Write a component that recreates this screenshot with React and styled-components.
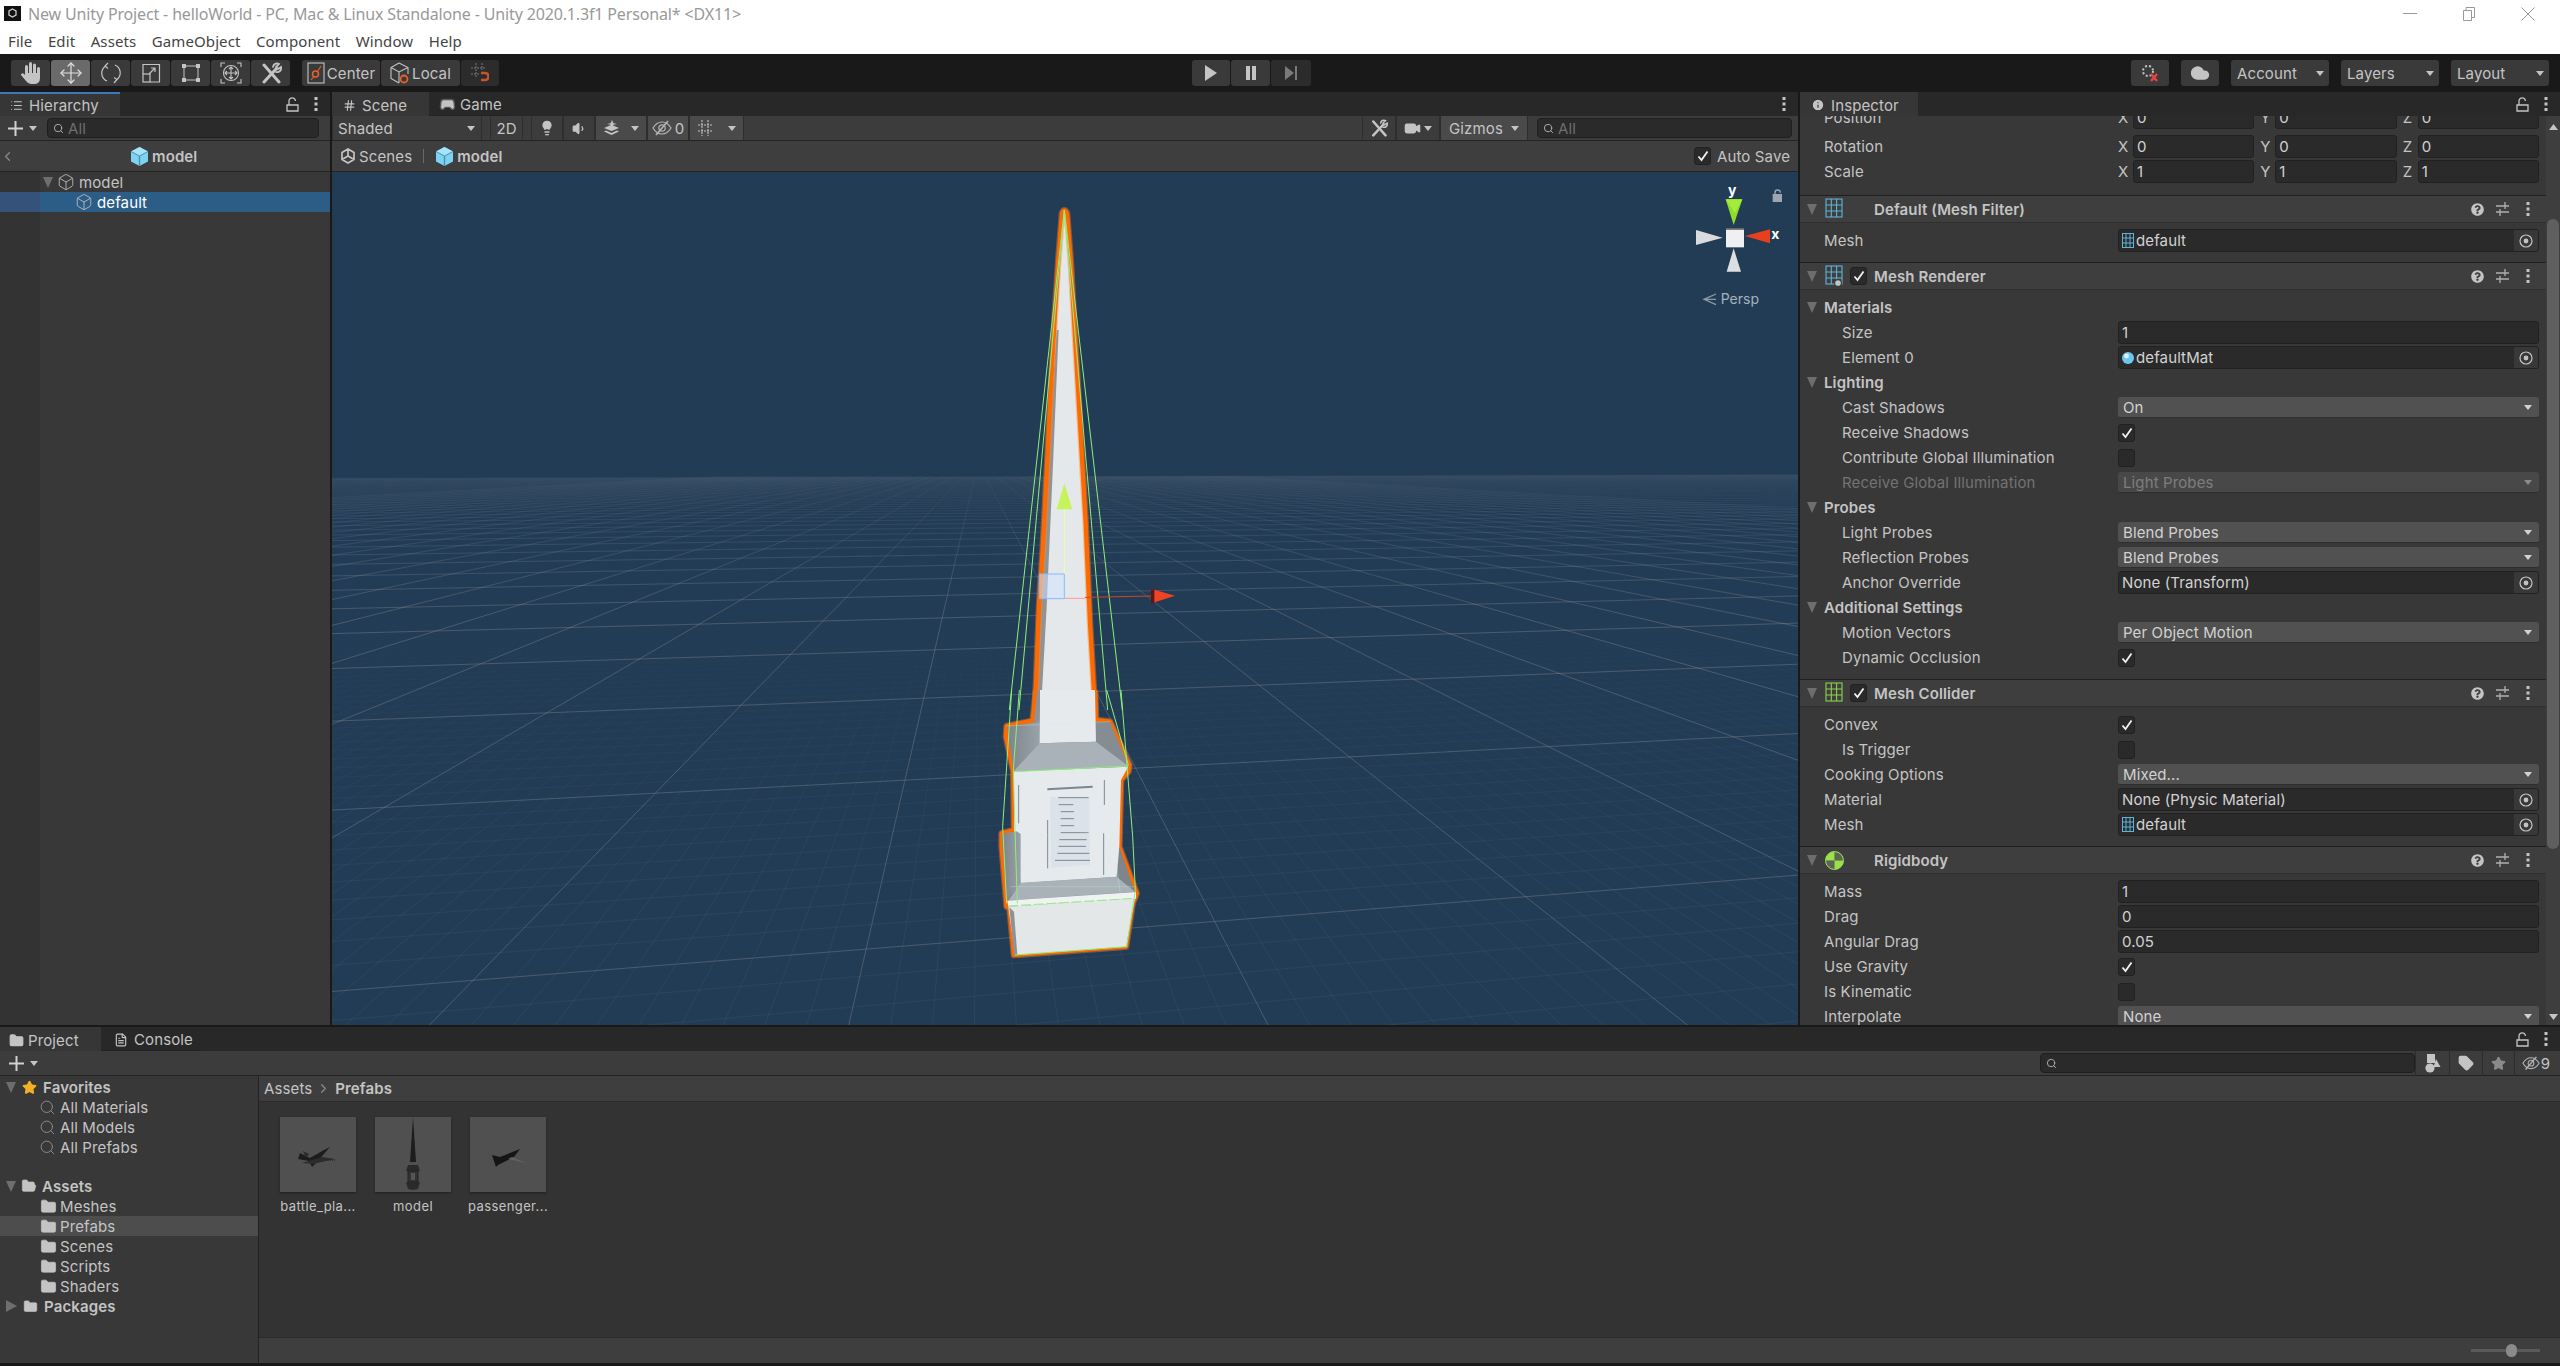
import React from "react";
import styled, { createGlobalStyle } from "styled-components";
import { Move, Box, Folder, FolderOpen, Search, Star, Tag, Cloud, Lightbulb, Volume1, Video, Info, FileText, Gamepad2, ChevronLeft, ChevronRight, Hash, List } from "lucide-react";
import { FaQuestionCircle } from "react-icons/fa";

const GlobalStyle = createGlobalStyle`
  html, body { margin: 0; padding: 0; background: #191919; overflow: hidden; }
  * { box-sizing: border-box; }
  svg { display: block; flex: none; }
`;

const Window = styled.div`
  width: 2560px;
  height: 1366px;
  display: flex;
  flex-direction: column;
  background: #191919;
  font-family: Inter, "Liberation Sans", sans-serif;
  font-size: 15px;
  letter-spacing: 0.12px;
  color: #c4c4c4;
  overflow: hidden;
`;

const TitleBar = styled.div`
  height: 27px;
  background: #fff;
  display: flex;
  align-items: center;
  padding-left: 4px;
  font-family: "Noto Sans", sans-serif;
  font-size: 16px;
  letter-spacing: -0.15px;
  color: #999;
`;
const TitleText = styled.span`
  margin-left: 7px;
  white-space: nowrap;
`;
const WinControls = styled.div`
  margin-left: auto;
  padding-right: 3px;
  display: flex;
`;
const WinButton = styled.div`
  width: 59px;
  height: 27px;
  display: flex;
  align-items: center;
  justify-content: center;
`;
const MenuBar = styled.div`
  height: 27px;
  background: #fff;
  display: flex;
  align-items: center;
  gap: 15.5px;
  padding-left: 8px;
  font-family: "Noto Sans", sans-serif;
  font-size: 15px;
  letter-spacing: 0.1px;
  color: #444;
`;

const Toolbar = styled.div`
  height: 38px;
  background: #191919;
  display: flex;
  align-items: center;
  padding: 0 11px 0 11px;
`;
const ToolGroup = styled.div`
  display: flex;
  gap: 1px;
  margin-left: ${p => p.$ml || 0}px;
`;
const ToolButton = styled.div`
  width: ${p => p.$w || 39}px;
  height: 26px;
  display: flex;
  align-items: center;
  justify-content: center;
  gap: 2px;
  background: ${p => (p.$on ? "#6a6a6a" : p.$dim ? "#2c2c2c" : "#3a3a3a")};
  border-radius: 3px;
  color: #c4c4c4;
`;
const RightGroup = styled.div`
  margin-left: auto;
  display: flex;
  gap: 12px;
`;
const TopDropdown = styled.div`
  width: 98px;
  height: 26px;
  background: #3a3a3a;
  border-radius: 3px;
  display: flex;
  align-items: center;
  justify-content: space-between;
  padding: 0 5px 0 6px;
`;

const Arrow = styled.i`
  display: block;
  flex: none;
  width: 0;
  height: 0;
  border-left: ${p => p.$s || 4}px solid transparent;
  border-right: ${p => p.$s || 4}px solid transparent;
  border-top: ${p => (p.$s || 4) + 1}px solid ${p => p.$c || "#c4c4c4"};
`;
const Caret = styled.i`
  display: block;
  flex: none;
  width: 0;
  height: 0;
  ${p =>
    p.$right
      ? `border-top: 6px solid transparent; border-bottom: 6px solid transparent; border-left: 11px solid #6e6e6e;`
      : `border-left: 5.5px solid transparent; border-right: 5.5px solid transparent; border-top: 11px solid #6e6e6e;`}
`;

const TopArea = styled.div`
  height: 933px;
  display: flex;
  gap: 2px;
`;
const Panel = styled.div`
  width: ${p => p.$w}px;
  display: flex;
  flex-direction: column;
  background: #383838;
  overflow: hidden;
  position: relative;
`;
const TabStrip = styled.div`
  height: 24px;
  flex: none;
  background: #282828;
  display: flex;
  align-items: stretch;
  position: relative;
  z-index: 1;
`;
const Tab = styled.div`
  width: ${p => p.$w}px;
  display: flex;
  align-items: center;
  gap: ${p => p.$gap || 6}px;
  padding-left: ${p => p.$pl || 10}px;
  background: ${p => (p.$active ? "#363636" : "transparent")};
  border-top: 2px solid ${p => (p.$focus ? "#3a79bb" : "transparent")};
  border-bottom: ${p => (p.$active ? "0" : "1px solid #232323")};
`;
const TabActions = styled.div`
  margin-left: auto;
  display: flex;
  align-items: center;
  gap: 15px;
  padding-right: 12px;
`;
const PanelBar = styled.div`
  height: 25px;
  flex: none;
  background: #3c3c3c;
  border-bottom: 1px solid #232323;
  display: flex;
  align-items: center;
`;
const SearchBox = styled.div`
  width: ${p => p.$w}px;
  height: 20px;
  flex: none;
  margin-left: ${p => p.$ml || 0}px;
  background: #2a2a2a;
  border: 1px solid #1f1f1f;
  border-radius: 4px;
  display: flex;
  align-items: center;
  gap: 4px;
  padding-left: 5px;
  color: #6e6e6e;
`;
const Crumbs = styled.div`
  height: 31px;
  flex: none;
  background: #3e3e3e;
  border-bottom: 1px solid #232323;
  display: flex;
  align-items: center;
  position: relative;
`;
const CrumbBold = styled.span`
  font-weight: 600;
  margin-left: ${p => p.$ml || 0}px;
`;
const CrumbCenter = styled.span`
  margin-left: 116px;
  display: flex;
  align-items: center;
  gap: 4px;
`;
const TreeBody = styled.div`
  flex: 1;
  display: flex;
  flex-direction: column;
  background: linear-gradient(90deg, #333 40px, #383838 40px);
`;
const TreeRow = styled.div`
  height: 20px;
  display: flex;
  align-items: center;
  gap: ${p => p.$gap || 4}px;
  padding-left: ${p => p.$pl}px;
  background: ${p => (p.$sel ? "linear-gradient(90deg, #34527a 40px, #2c5d87 40px)" : "transparent")};
  color: ${p => (p.$sel ? "#fff" : "#c4c4c4")};
`;

const SceneBar = styled(PanelBar)`
  padding: 0;
`;
const SceneTool = styled.div`
  width: ${p => p.$w}px;
  height: 24px;
  margin-left: ${p => p.$ml || 0}px;
  display: flex;
  align-items: center;
  justify-content: ${p => (p.$between ? "space-between" : "center")};
  padding: ${p => (p.$between ? "0 6px 0 5px" : "0")};
  gap: 3px;
  background: ${p => (p.$on ? "#4a4a4a" : "transparent")};
  border-left: 1px solid #2e2e2e;
  border-right: 1px solid #2e2e2e;
  flex: none;
`;
const SceneRight = styled.div`
  margin-left: auto;
  display: flex;
  align-items: center;
  padding-right: 6px;
`;
const SceneView = styled.div`
  flex: 1;
  background: #233c55;
  position: relative;
  overflow: hidden;
`;
const SceneCrumbs = styled(Crumbs)`
  padding-left: 8px;
`;
const ScenesLabel = styled.span`
  margin-left: 3px;
`;
const AutoSave = styled.div`
  margin-left: auto;
  padding-right: 8px;
  display: flex;
  align-items: center;
  gap: 6px;
`;
const Divider = styled.i`
  display: block;
  width: 1px;
  height: 14px;
  background: #6a6a6a;
  margin: 0 12px 0 11px;
`;
const Canvas = styled.svg`
  position: absolute;
  left: 0;
  top: 0;
`;

const InspectorBody = styled.div`
  flex: 1;
  display: flex;
  overflow: hidden;
`;
const InspectorScroll = styled.div`
  width: 746px;
  overflow: hidden;
  flex: none;
`;
const ScrollTrack = styled.div`
  width: 14px;
  flex: none;
  display: flex;
  flex-direction: column;
  align-items: center;
  background: #3e3e3e;
  padding-top: 8px;
`;
const ScrollThumb = styled.div`
  width: 12px;
  height: 630px;
  margin-top: 89px;
  background: #5f5f5f;
  border-radius: 6px;
`;
const ScrollDown = styled.div`
  margin-top: 165px;
`;
const CompBody = styled.div`
  padding: ${p => p.$top ?? 5}px 0 ${p => p.$bottom ?? 9}px;
  margin-top: ${p => p.$mt || 0}px;
`;
const Row = styled.div`
  height: 25px;
  display: grid;
  grid-template-columns: 318px 421px;
  align-items: center;
  margin-bottom: ${p => p.$mb || 0}px;
`;
const RowLabel = styled.div`
  padding-left: ${p => p.$in || 24}px;
  color: ${p => (p.$off ? "#737373" : "#c4c4c4")};
  white-space: nowrap;
`;
const SectionRow = styled.div`
  height: 25px;
  display: flex;
  align-items: center;
  padding-left: 7px;
  gap: 7px;
  font-weight: 600;
`;
const Field = styled.div`
  height: 23px;
  flex: 1;
  min-width: 0;
  background: #2a2a2a;
  border: 1px solid #212121;
  border-radius: 3px;
  display: flex;
  align-items: center;
  padding-left: 3px;
  color: #d2d2d2;
  overflow: hidden;
`;
const ObjIcon = styled.span`
  margin-right: 2px;
  display: flex;
`;
const Picker = styled.div`
  margin-left: auto;
  width: 24px;
  height: 21px;
  background: #383838;
  display: flex;
  align-items: center;
  justify-content: center;
`;
const Dropdown = styled.div`
  height: 21px;
  background: ${p => (p.$off ? "#484848" : "#515151")};
  border-bottom: 1px solid #2e2e2e;
  border-radius: 3px;
  display: flex;
  align-items: center;
  justify-content: space-between;
  padding: 0 7px 0 5px;
  color: ${p => (p.$off ? "#7e7e7e" : "#d2d2d2")};
`;
const Vector = styled.div`
  display: grid;
  grid-template-columns: repeat(3, 1fr);
  gap: 6px;
`;
const Axis = styled.div`
  display: flex;
  align-items: center;
`;
const AxisName = styled.span`
  width: 15px;
  flex: none;
`;
const CheckBox = styled.div`
  width: 17px;
  height: 18px;
  flex: none;
  background: #2a2a2a;
  border: 1px solid #212121;
  border-radius: 3px;
  display: flex;
  align-items: center;
  justify-content: center;
`;
const CompHeader = styled.div`
  height: 28px;
  background: #3e3e3e;
  border-top: 1px solid #1f1f1f;
  border-bottom: 1px solid #2f2f2f;
  display: flex;
  align-items: center;
  padding-left: 7px;
  font-weight: 600;
`;
const HeaderIcon = styled.div`
  width: 18px;
  margin-left: 8px;
  flex: none;
`;
const HeaderCheck = styled.div`
  width: 17px;
  margin-left: 7px;
  margin-right: 7px;
  flex: none;
`;
const HeaderTools = styled.div`
  margin-left: auto;
  display: flex;
  align-items: center;
  gap: 12px;
  padding-right: 16px;
`;
const HeaderDots = styled.span`
  margin-left: 5px;
`;

const Separator = styled.div`
  height: 2px;
  flex: none;
`;
const BottomArea = styled.div`
  height: 336px;
  display: flex;
  flex-direction: column;
  background: #383838;
`;
const ProjectBody = styled.div`
  flex: 1;
  display: flex;
  min-height: 0;
`;
const ProjectTree = styled.div`
  width: 259px;
  flex: none;
  border-right: 1px solid #232323;
  padding-top: 1px;
`;
const ProjectRow = styled.div`
  height: 20px;
  display: flex;
  align-items: center;
  padding-left: ${p => p.$pl}px;
  gap: ${p => p.$gap || 6}px;
  margin-top: ${p => p.$mt || 0}px;
  font-weight: ${p => (p.$bold ? 600 : 400)};
  background: ${p => (p.$sel ? "#4d4d4d" : "transparent")};
`;
const ProjectMain = styled.div`
  flex: 1;
  display: flex;
  flex-direction: column;
  background: #333;
`;
const AssetCrumbs = styled.div`
  height: 26px;
  flex: none;
  background: #3e3e3e;
  border-bottom: 1px solid #2c2c2c;
  display: flex;
  align-items: center;
  padding-left: 5px;
  gap: 4px;
`;
const AssetGrid = styled.div`
  flex: 1;
  display: flex;
  gap: 19px;
  padding: 15px 0 0 21px;
`;
const Asset = styled.div`
  width: 76px;
  display: flex;
  flex-direction: column;
  align-items: center;
`;
const Thumb = styled.div`
  width: 76px;
  height: 75px;
  background: #505050;
  box-shadow: 0 1px 2px #202020;
`;
const AssetName = styled.div`
  margin-top: 6px;
  white-space: nowrap;
  font-size: 13px;
  letter-spacing: 0.4px;
`;
const StatusBar = styled.div`
  height: 26px;
  flex: none;
  background: #3e3e3e;
  border-top: 1px solid #2c2c2c;
  display: flex;
  align-items: center;
  justify-content: flex-end;
  padding-right: 20px;
`;
const SliderTrack = styled.div`
  width: 69px;
  height: 3px;
  background: #5a5a5a;
  display: flex;
  align-items: center;
`;
const SliderKnob = styled.div`
  width: 11px;
  height: 13px;
  flex: none;
  margin-left: 35px;
  background: #8a8a8a;
  border-radius: 6px;
`;
const FilterTool = styled.div`
  width: ${p => p.$w}px;
  height: 25px;
  flex: none;
  display: flex;
  align-items: center;
  justify-content: center;
  gap: 1px;
  border-left: 1px solid #2c2c2c;
`;
const PlusMark = styled.svg`
  margin-left: ${p => p.$ml || 8}px;
`;
const PlusArrow = styled(Arrow)`
  margin-left: 5px;
  margin-right: ${p => p.$mr || 0}px;
`;
const GapArrow = styled(Arrow)`
  margin-left: ${p => p.$ml || 8}px;
`;

// ---- small drawn icons ----
const Dots = () => (
  <svg width="4" height="14" viewBox="0 0 4 14" fill="#c4c4c4">
    <rect x="0.5" y="0" width="3" height="3" />
    <rect x="0.5" y="5.5" width="3" height="3" />
    <rect x="0.5" y="11" width="3" height="3" />
  </svg>
);
const Lock = ({ c = "#c4c4c4" }) => (
  <svg width="13" height="15" viewBox="0 0 13 15" fill="none" stroke={c} strokeWidth="1.3">
    <path d="M1 8h11v6H1z" />
    <path d="M3 8V4a3.2 3.2 0 0 1 6.4 0" />
  </svg>
);
const Check = () => (
  <svg width="12" height="12" viewBox="0 0 12 12" fill="none" stroke="#f2f2f2" strokeWidth="1.8">
    <path d="M1.5 6.5 4.5 10 10.5 1.5" />
  </svg>
);
const HandIcon = () => (
  <svg width="22" height="24" viewBox="0 0 22 24" fill="#c4c4c4">
    <rect x="5" y="4" width="3" height="12" rx="1.5" />
    <rect x="9" y="1" width="3" height="14" rx="1.5" />
    <rect x="13" y="2.5" width="3" height="13" rx="1.5" />
    <rect x="17" y="6" width="3" height="10" rx="1.5" />
    <path d="M5 12h15v5q0 6-6 6h-3q-3 0-5-3l-5-6q-.5-1 1-1.5 1-.5 2 .5l2 2z" />
  </svg>
);
const MeshIcon = ({ c = "#5fb4d8", s = 18, eye }) => (
  <svg width={s} height={s + 4} viewBox="0 0 18 22" fill="none" stroke={c} strokeWidth="1.1">
    <rect x="1" y="1" width="16" height="18" />
    <path d="M6.3 1v18M11.6 1v18M1 7h16M1 13h16" />
    {eye && <circle cx="13" cy="18" r="3.4" fill="#c4c4c4" stroke="#383838" />}
  </svg>
);
const SmallMesh = () => (
  <svg width="12" height="15" viewBox="0 0 12 15" fill="none" stroke="#5fb4d8" strokeWidth="1">
    <rect x="0.5" y="0.5" width="11" height="14" />
    <path d="M4 .5v14M8 .5v14M.5 5h11M.5 10h11" />
  </svg>
);
const MaterialBall = () => (
  <svg width="12" height="14" viewBox="0 0 12 14">
    <circle cx="6" cy="7" r="6" fill="#6cc6ee" />
    <circle cx="4.5" cy="5" r="2.4" fill="#dff4ff" />
  </svg>
);
const SliderIcon = () => (
  <svg width="13" height="14" viewBox="0 0 13 14" fill="none" stroke="#b0b0b0" strokeWidth="1.3">
    <path d="M0 4h13M0 10h13M9 0v7M4 7v7" />
  </svg>
);
const Target = () => (
  <svg width="14" height="14" viewBox="0 0 14 14" fill="none" stroke="#c4c4c4" strokeWidth="1.2">
    <circle cx="7" cy="7" r="6" />
    <circle cx="7" cy="7" r="1.8" fill="#c4c4c4" />
  </svg>
);
const PrefabCube = () => (
  <svg width="17" height="19" viewBox="0 0 17 19">
    <path d="M8.5 0 17 4.5v10L8.5 19 0 14.5v-10z" fill="#7fd3f2" />
    <path d="M8.5 9 17 4.5 8.5 0 0 4.5z" fill="#a6e4fa" />
    <path d="M8.5 9v10" stroke="#4d8fae" strokeWidth="1.4" />
    <path d="M0 4.5 8.5 9 17 4.5" stroke="#4d8fae" strokeWidth="1" fill="none" />
  </svg>
);
const RotateIcon = () => (
  <svg width="22" height="22" viewBox="0 0 22 22" fill="none" stroke="#c4c4c4" strokeWidth="1.2">
    <path d="M7 19a8.5 8.5 0 0 1-2-14.5M15 3a8.5 8.5 0 0 1 2 14.5" />
    <path d="M8 1 5 4l3 2.5M14 21l3-3.5-3-2" />
  </svg>
);
const ScaleIcon = () => (
  <svg width="20" height="20" viewBox="0 0 20 20" fill="none" stroke="#c4c4c4" strokeWidth="1.2">
    <path d="M2 11V1.5h16.5V19H9" />
    <rect x="2" y="11" width="7" height="8" />
    <path d="M8 11l6-6M10 5h4v4" />
  </svg>
);
const RectIcon = () => (
  <svg width="20" height="20" viewBox="0 0 20 20" fill="#c4c4c4">
    <path d="M3 3h14v14H3z" fill="none" stroke="#c4c4c4" strokeWidth="1" />
    <rect x="1" y="1" width="4" height="4" />
    <rect x="15" y="1" width="4" height="4" />
    <rect x="1" y="15" width="4" height="4" />
    <rect x="15" y="15" width="4" height="4" />
  </svg>
);
const TransformIcon = () => (
  <svg width="22" height="22" viewBox="0 0 22 22" fill="none" stroke="#c4c4c4" strokeWidth="1.1">
    <circle cx="11" cy="11" r="7.5" />
    <path d="M11 5v12M5 11h12M9 7l2-2 2 2M9 15l2 2 2-2M7 9l-2 2 2 2M15 9l2 2-2 2" />
    <path d="M1 5V1h4M17 1h4v4M1 17v4h4M21 17v4h-4" />
  </svg>
);
const ToolsIcon = ({ s = 22 }) => (
  <svg width={s} height={s} viewBox="0 0 22 22" fill="none" stroke="#c4c4c4" strokeLinecap="round">
    <path d="M4 20 16 7" strokeWidth="3" />
    <path d="M13 5a4 4 0 0 1 6-3l-3 3 2 2 3-2a4 4 0 0 1-5 5" strokeWidth="1.8" />
    <path d="M4 3l15 17" strokeWidth="3" />
  </svg>
);
const PivotIcon = () => (
  <svg width="18" height="22" viewBox="0 0 18 22" fill="none">
    <rect x="1" y="1" width="16" height="20" stroke="#c4c4c4" strokeWidth="1.1" />
    <circle cx="8.5" cy="12" r="3" stroke="#e8622a" strokeWidth="1.5" />
    <path d="M10.5 9.5 14 4M7 14.5 4 18" stroke="#e8622a" strokeWidth="1.1" />
  </svg>
);
const LocalIcon = () => (
  <svg width="20" height="22" viewBox="0 0 20 22" fill="none">
    <path d="M9 1 18 5.5V12M9 1 1 5.5v11L9 21M1 5.5 9 10l9-4.5M9 10v11" stroke="#c4c4c4" strokeWidth="1.1" />
    <circle cx="14" cy="17" r="3.5" stroke="#e8622a" strokeWidth="1.8" />
  </svg>
);
const SnapIcon = () => (
  <svg width="18" height="20" viewBox="0 0 18 20" fill="none">
    <path d="M5 0v15M11 0v7M0 5h15M0 11h8" stroke="#777" strokeWidth="1" strokeDasharray="2 1" />
    <path d="M10 10h4a3.5 3.5 0 0 1 0 7h-4" stroke="#c8552a" strokeWidth="2.6" />
  </svg>
);
const EyeOff = ({ s = 20 }) => (
  <svg width={s} height={s * 0.8} viewBox="0 0 20 16" fill="none" stroke="#b5b5b5" strokeWidth="1.2">
    <path d="M1 8c3-5 6-6 9-6s6 1 9 6c-3 5-6 6-9 6s-6-1-9-6z" />
    <circle cx="10" cy="8" r="3.2" />
    <path d="M4 15 16 1" strokeWidth="1.6" />
  </svg>
);
const FxIcon = () => (
  <svg width="17" height="18" viewBox="0 0 17 18" fill="#c4c4c4">
    <path d="M9 1l1.4 3.2L14 5l-3.6.8L9 9 7.6 5.8 4 5l3.6-.8z" />
    <path d="M1 9l7.5 3 7.5-3-7.5-3.2zM1 12.5 8.5 16l7.5-3.5-2-1-5.5 2.5L3 11.5z" />
  </svg>
);
const GridToggle = () => (
  <svg width="16" height="18" viewBox="0 0 16 18" fill="none" stroke="#c4c4c4" strokeWidth="1.1" strokeDasharray="2 1">
    <path d="M5 1v16M11 1v16M1 6h14M1 12h14" />
  </svg>
);
const UnityMark = ({ s = 16, c = "#c4c4c4" }) => (
  <svg width={s} height={s} viewBox="0 0 16 16" fill="none" stroke={c} strokeWidth="1.7">
    <path d="M8 1 14 4.5v7L8 15 2 11.5v-7zM8 8V1M8 8l6 3.5M8 8l-6 3.5" />
  </svg>
);
const Rigidbody = () => (
  <svg width="19" height="19" viewBox="0 0 19 19">
    <circle cx="9.5" cy="9.5" r="9" fill="#2f3a2a" stroke="#9be24a" strokeWidth="1" />
    <path d="M9.5 .5a9 9 0 0 0-9 9h9zM9.5 18.5a9 9 0 0 0 9-9h-9z" fill="#9be24a" />
    <path d="M9.5 .5a9 9 0 0 1 9 9h-9zM9.5 18.5a9 9 0 0 1-9-9h9z" fill="#e9e9e9" opacity=".25" />
  </svg>
);
const ShapesIcon = () => (
  <svg width="16" height="19" viewBox="0 0 16 19" fill="#c4c4c4">
    <rect x="2" y="0" width="8" height="9" />
    <circle cx="5" cy="14" r="4.6" />
    <path d="M11 5l4.5 8h-7z" />
  </svg>
);
const TileSpire = () => (
  <svg width="76" height="75" viewBox="0 0 76 75">
    <path d="M38 0 41 45H35z" fill="#1d1d1d" />
    <path d="M33 48h10l2 6H31z" fill="#2a2a2a" />
    <path d="M33 54h10v11H33z" fill="#333" stroke="#222" />
    <path d="M36 56h4v7h-4z" fill="#555" />
    <path d="M31 65h14l-2 7-5 1-5-1z" fill="#2a2a2a" />
  </svg>
);
const TilePlaneA = () => (
  <svg width="76" height="75" viewBox="0 0 76 75">
    <path d="M20 36 30 41 44 33 50 30 36 46 32 50 29 44 18 42z" fill="#1c1c1c" />
    <path d="M23 34l6 3-3 4zM22 46l20-6 13 2-22 5z" fill="#2c2c2c" />
    <path d="M46 43l10 0" stroke="#222" strokeWidth="1" strokeDasharray="1 1" />
  </svg>
);
const TilePlaneB = () => (
  <svg width="76" height="75" viewBox="0 0 76 75">
    <path d="M22 38 30 40 50 32 44 40 28 48 26 50 24 44z" fill="#151515" />
    <path d="M42 40 56 46 38 42z" fill="#626262" />
  </svg>
);

// ---- the 3D view ----
const H = 462;
const VP1 = 7000;
const VP2 = 978;
const crossLine = n => {
  const d = 1 / (0.00211 + 0.0011 * n);
  const at = x => H + (d * (VP1 - x)) / (VP1 - 1032);
  return `M332 ${at(332).toFixed(1)}L1798 ${at(1798).toFixed(1)}`;
};
// start a little under the horizon so the lines don't pile up on one point
const recedeLine = k => {
  const x = 848.5 + 420 * k;
  const sx = VP2 + ((x - VP2) * 14) / 564;
  return `M${sx.toFixed(1)} ${H + 14}L${x.toFixed(1)} 1026`;
};
const range = (a, b) => {
  const out = [];
  for (let i = a; i <= b; i += 1) out.push(i);
  return out;
};
const majorPath = range(0, 60).map(crossLine).join("") + range(-24, 24).map(recedeLine).join("");
const minorPath =
  range(-10, 160).filter(i => i % 10 !== 0).map(i => crossLine(i / 10)).join("") +
  range(-200, 200).filter(i => i % 10 !== 0).map(i => recedeLine(i / 10)).join("");

const Scene3D = () => (
  <Canvas width="1466" height="853" viewBox="332 172 1466 853">
    <defs>
      <linearGradient id="gridMajor" gradientUnits="userSpaceOnUse" x1="0" x2="0" y1={H} y2="620">
        <stop offset="0" stopColor="#8e9aa5" stopOpacity="0.02" />
        <stop offset="0.45" stopColor="#8e9aa5" stopOpacity="0.15" />
        <stop offset="1" stopColor="#8c8c8c" stopOpacity="0.38" />
      </linearGradient>
      <linearGradient id="gridMinor" gradientUnits="userSpaceOnUse" x1="0" x2="0" y1="600" y2="900">
        <stop offset="0" stopColor="#8e9aa5" stopOpacity="0" />
        <stop offset="1" stopColor="#8e9aa5" stopOpacity="0.08" />
      </linearGradient>
      <linearGradient id="roofL" x1="0" x2="1" y1="0" y2="0">
        <stop offset="0" stopColor="#7d858b" />
        <stop offset="1" stopColor="#9aa2a9" />
      </linearGradient>
    </defs>
    <path d={minorPath} stroke="url(#gridMinor)" strokeWidth="1" fill="none" />
    <path d={majorPath} stroke="url(#gridMajor)" strokeWidth="1" fill="none" />

    {/* spire shaft */}
    <g transform="translate(940 190) scale(.33333)">
      <path d="M373 60 355 210 345 370 330 640 318 890 308 1080 297 1250 285 1560H465L450 1300 437 1000 420 700 405 440 392 210z" fill="#e4e8ea" />
      <path d="M350 420h6L340 800 320 1250 303 1560H285L297 1250 318 890z" fill="#909394" />
      <path d="M285 1560 297 1250 308 1080 318 890 330 640 345 370 355 210 366 70Q373 52 381 70L392 210 405 440 420 700 437 1000 450 1300 465 1560" fill="none" stroke="#ff8a30" strokeOpacity=".4" strokeWidth="20" strokeLinejoin="round" />
      <path d="M285 1560 297 1250 308 1080 318 890 330 640 345 370 355 210 366 70Q373 52 381 70L392 210 405 440 420 700 437 1000 450 1300 465 1560" fill="none" stroke="#ff6a00" strokeWidth="13" strokeLinejoin="round" />
      <g fill="none" stroke="#8cf07a" strokeWidth="3">
        <path d="M373 60 208 1560M373 60 237 1560M373 60 503 1560M373 60 547 1560" />
      </g>
      <path d="M373 958V1225" stroke="#e9ffa0" strokeWidth="3" />
      <path d="M373 1225H435" stroke="#ff9a8a" strokeWidth="3" />
      <path d="M435 1222 640 1218" stroke="#c8452f" strokeWidth="3" />
      <path d="M298 1152H373V1226H298z" fill="#cfe4ff" fillOpacity=".55" stroke="#8ab8ff" strokeWidth="3" />
      <path d="M373 880 397 958H350z" fill="#c6f25a" />
      <path d="M635 1197 705 1217 635 1240z" fill="#ef4322" />
      <path d="M633 1198h10v42h-10z" fill="#5e1410" />
    </g>

    {/* spire body */}
    <g transform="translate(960 690) scale(.33333)">
      <path d="M228 0 218 92 140 108 138 140 160 245 162 420 125 430 125 470 140 650 148 650 162 795 498 770 518 640 530 610 478 470 483 270 505 245 508 225 450 95 408 90 405 0" fill="#7f878d" stroke="#ff8a30" strokeOpacity=".4" strokeWidth="20" strokeLinejoin="round" />
      <path d="M228 0 218 92 140 108 138 140 160 245 162 420 125 430 125 470 140 650 148 650 162 795 498 770 518 640 530 610 478 470 483 270 505 245 508 225 450 95 408 90 405 0" fill="#7f878d" stroke="#ff6a00" strokeWidth="13" strokeLinejoin="round" />
      <path d="M240 0H405L408 155 238 160z" fill="#e6eaec" />
      <path d="M232 0H240L238 100 222 92z" fill="#8f9294" />
      <path d="M142 110 238 95 238 160 160 245z" fill="url(#roofL)" />
      <path d="M408 95H450L505 225 408 155z" fill="#858d93" />
      <path d="M238 160 408 155 505 228 160 245z" fill="#a9b1b9" />
      <path d="M162 245 505 230 483 270 478 470 475 560 182 580 162 420z" fill="#e6eaec" />
      <path d="M125 432 170 424 182 432 182 580 140 630z" fill="url(#roofL)" />
      <path d="M478 470 525 605 470 560z" fill="#7e868c" />
      <path d="M182 578 470 560 525 605 145 632z" fill="#a9b1b9" />
      <path d="M142 632 528 606V626L145 650z" fill="#eef2f2" />
      <path d="M145 650 525 625 498 770 165 795z" fill="#e3e7e8" />
      <path d="M148 652 162 665 172 795H162z" fill="#8f9294" />
      <path d="M270 320H388L390 525 273 533z" fill="#dce2e9" />
      <path d="M262 298 398 290" stroke="#7c8790" strokeWidth="6" />
      <g stroke="#7c8790" strokeWidth="3">
        <path d="M295 323H386M296 344H340M302 365H342M302 386H342M302 407H342M302 428H386M298 449H380M296 469H378M292 490H388M285 511H390" />
        <path d="M263 390V535M433 270V345M431 430V555M176 285V400" />
      </g>
      <g fill="none" stroke="#8cf07a" strokeWidth="3">
        <path d="M155 0 128 410 140 640M178 0 160 240 165 420 172 640" />
        <path d="M440 0 505 225M483 0 518 440 526 600 500 770" />
        <path d="M160 245 505 228M165 795 500 770" />
        <path d="M145 648 525 625" strokeDasharray="30 8" />
      </g>
      <g fill="none" stroke="#c8f5c8" strokeWidth="2" opacity=".45">
        <path d="M140 108 450 95M180 440 458 425 500 770M458 425 438 560M150 590 525 590" />
      </g>
    </g>

    {/* orientation gizmo */}
    <g transform="translate(1660 170) scale(.33333)">
      <path d="M221 165 197 88H247z" fill="#8fdc2e" />
      <path d="M197 88H247L225 130z" fill="#a4ec3c" />
      <path d="M255 198 330 178V220z" fill="#e8401c" />
      <path d="M188 203 108 180V225z" fill="#d9dcdf" />
      <path d="M221 235 200 305H243z" fill="#dcdfe2" />
      <rect x="198" y="178" width="54" height="54" fill="#eef0f3" />
      <rect x="198" y="174" width="54" height="5" fill="#666" />
      <text x="217" y="76" textAnchor="middle" fontFamily="Inter" fontWeight="700" fontSize="42" fill="#fff">y</text>
      <text x="346" y="208" textAnchor="middle" fontFamily="Inter" fontWeight="700" fontSize="42" fill="#fff">x</text>
      <path d="M338 72h28v24h-28z" fill="#9aa6b1" />
      <path d="M345 72v-4a8 8 0 0 1 16 0" fill="none" stroke="#9aa6b1" strokeWidth="4" />
      <path d="M168 372 132 388 168 404M168 388H136" fill="none" stroke="#8b9aa8" strokeWidth="4" />
      <text x="182" y="402" fontFamily="Inter" fontSize="42" fill="#a4b2bf">Persp</text>
    </g>
  </Canvas>
);

// ---- inspector helpers ----
const Vec = ({ v }) => (
  <Vector>
    {["X", "Y", "Z"].map(a => (
      <Axis key={a}>
        <AxisName>{a}</AxisName>
        <Field>{v}</Field>
      </Axis>
    ))}
  </Vector>
);
const Obj = ({ icon, children }) => (
  <Field>
    {icon && <ObjIcon>{icon}</ObjIcon>}
    {children}
    <Picker><Target /></Picker>
  </Field>
);
const Drop = ({ children, off }) => (
  <Dropdown $off={off}>
    {children}
    <Arrow $c={off ? "#8a8a8a" : "#d2d2d2"} />
  </Dropdown>
);
const Header = ({ icon, title, check }) => (
  <CompHeader>
    <Caret />
    <HeaderIcon>{icon}</HeaderIcon>
    <HeaderCheck>{check && <CheckBox><Check /></CheckBox>}</HeaderCheck>
    {title}
    <HeaderTools>
      <FaQuestionCircle size={13} color="#c4c4c4" />
      <SliderIcon />
      <HeaderDots><Dots /></HeaderDots>
    </HeaderTools>
  </CompHeader>
);
const Section = ({ children }) => (
  <SectionRow>
    <Caret />
    {children}
  </SectionRow>
);
const Line = ({ label, indent, off, mb, children }) => (
  <Row $mb={mb}>
    <RowLabel $in={indent} $off={off}>{label}</RowLabel>
    {children}
  </Row>
);
const Tick = ({ on }) => <CheckBox>{on && <Check />}</CheckBox>;

const Inspector = () => (
  <InspectorBody>
    <InspectorScroll>
      <CompBody $top={0} $mt={-11} $bottom={11}>
        <Line label="Position" mb={4}><Vec v="0" /></Line>
        <Line label="Rotation"><Vec v="0" /></Line>
        <Line label="Scale"><Vec v="1" /></Line>
      </CompBody>
      <Header icon={<MeshIcon />} title="Default (Mesh Filter)" />
      <CompBody>
        <Line label="Mesh"><Obj icon={<SmallMesh />}>default</Obj></Line>
      </CompBody>
      <Header icon={<MeshIcon eye />} title="Mesh Renderer" check />
      <CompBody>
        <Section>Materials</Section>
        <Line label="Size" indent={42}><Field>1</Field></Line>
        <Line label="Element 0" indent={42}><Obj icon={<MaterialBall />}>defaultMat</Obj></Line>
        <Section>Lighting</Section>
        <Line label="Cast Shadows" indent={42}><Drop>On</Drop></Line>
        <Line label="Receive Shadows" indent={42}><Tick on /></Line>
        <Line label="Contribute Global Illumination" indent={42}><Tick /></Line>
        <Line label="Receive Global Illumination" indent={42} off><Drop off>Light Probes</Drop></Line>
        <Section>Probes</Section>
        <Line label="Light Probes" indent={42}><Drop>Blend Probes</Drop></Line>
        <Line label="Reflection Probes" indent={42}><Drop>Blend Probes</Drop></Line>
        <Line label="Anchor Override" indent={42}><Obj>None (Transform)</Obj></Line>
        <Section>Additional Settings</Section>
        <Line label="Motion Vectors" indent={42}><Drop>Per Object Motion</Drop></Line>
        <Line label="Dynamic Occlusion" indent={42}><Tick on /></Line>
      </CompBody>
      <Header icon={<MeshIcon c="#8bd44a" />} title="Mesh Collider" check />
      <CompBody>
        <Line label="Convex"><Tick on /></Line>
        <Line label="Is Trigger" indent={42}><Tick /></Line>
        <Line label="Cooking Options"><Drop>Mixed...</Drop></Line>
        <Line label="Material"><Obj>None (Physic Material)</Obj></Line>
        <Line label="Mesh"><Obj icon={<SmallMesh />}>default</Obj></Line>
      </CompBody>
      <Header icon={<Rigidbody />} title="Rigidbody" />
      <CompBody>
        <Line label="Mass"><Field>1</Field></Line>
        <Line label="Drag"><Field>0</Field></Line>
        <Line label="Angular Drag"><Field>0.05</Field></Line>
        <Line label="Use Gravity"><Tick on /></Line>
        <Line label="Is Kinematic"><Tick /></Line>
        <Line label="Interpolate"><Drop>None</Drop></Line>
      </CompBody>
    </InspectorScroll>
    <ScrollTrack>
      <svg width="9" height="6" viewBox="0 0 9 6" fill="#c4c4c4"><path d="M4.5 0 9 6H0z" /></svg>
      <ScrollThumb />
      <ScrollDown>
        <svg width="9" height="6" viewBox="0 0 9 6" fill="#c4c4c4"><path d="M0 0h9L4.5 6z" /></svg>
      </ScrollDown>
    </ScrollTrack>
  </InspectorBody>
);

const SearchIcon = ({ s = 11 }) => <Search size={s} color="#b5b5b5" strokeWidth={2} />;
const FolderIcon = () => <Folder size={17} fill="#c4c4c4" color="#c4c4c4" strokeWidth={1} />;
const Plus = ({ ml }) => (
  <PlusMark $ml={ml} width="17" height="17" viewBox="0 0 17 17" stroke="#d0d0d0" strokeWidth="2">
    <path d="M8.5 1v15M1 8.5h15" />
  </PlusMark>
);

export default function App() {
  return (
    <Window>
      <GlobalStyle />
      <TitleBar>
        <svg width="17" height="15" viewBox="0 0 17 15">
          <rect width="17" height="15" fill="#111" />
          <path d="M8.5 3 12 5v4l-3.5 2L5 9V5z" fill="none" stroke="#ccc" strokeWidth="1.3" />
        </svg>
        <TitleText>New Unity Project - helloWorld - PC, Mac &amp; Linux Standalone - Unity 2020.1.3f1 Personal* &lt;DX11&gt;</TitleText>
        <WinControls>
          <WinButton><svg width="14" height="2"><rect width="14" height="1" fill="#999" /></svg></WinButton>
          <WinButton><svg width="12" height="14" fill="none" stroke="#999"><path d="M.5 3.5h8v10h-8zM3 3.5V.5h8.5v10H8.5" /></svg></WinButton>
          <WinButton><svg width="14" height="14" stroke="#999"><path d="M.5.5l13 13M13.5.5l-13 13" /></svg></WinButton>
        </WinControls>
      </TitleBar>
      <MenuBar>
        {["File", "Edit", "Assets", "GameObject", "Component", "Window", "Help"].map(m => <span key={m}>{m}</span>)}
      </MenuBar>

      <Toolbar>
        <ToolGroup>
          <ToolButton><HandIcon /></ToolButton>
          <ToolButton $on><Move size={24} color="#e0e0e0" strokeWidth={1.2} /></ToolButton>
          <ToolButton><RotateIcon /></ToolButton>
          <ToolButton><ScaleIcon /></ToolButton>
          <ToolButton><RectIcon /></ToolButton>
          <ToolButton><TransformIcon /></ToolButton>
          <ToolButton><ToolsIcon /></ToolButton>
        </ToolGroup>
        <ToolGroup $ml={12}>
          <ToolButton $w={78}><PivotIcon />Center</ToolButton>
          <ToolButton $w={79}><LocalIcon />Local</ToolButton>
          <ToolButton $w={38} $dim><SnapIcon /></ToolButton>
        </ToolGroup>
        <ToolGroup $ml={693}>
          <ToolButton $w={38}><svg width="12" height="16" fill="#c4c4c4"><path d="M0 0l12 8-12 8z" /></svg></ToolButton>
          <ToolButton $w={39}><svg width="12" height="14" fill="#c4c4c4"><path d="M1 0h4v14H1zM7 0h4v14H7z" /></svg></ToolButton>
          <ToolButton $w={40} $dim><svg width="12" height="14" fill="#7a7a7a"><path d="M0 0l9 7-9 7zM10 0h2v14h-2z" /></svg></ToolButton>
        </ToolGroup>
        <RightGroup>
          <ToolButton $w={38}>
            <svg width="18" height="20" viewBox="0 0 18 20" fill="none">
              <circle cx="7" cy="8" r="5" stroke="#c4c4c4" strokeWidth="2" strokeDasharray="2 2" />
              <path d="M10 11l6 7M16 11l-6 7" stroke="#e04444" strokeWidth="2.6" />
            </svg>
          </ToolButton>
          <ToolButton $w={38}><Cloud size={20} fill="#c4c4c4" color="#c4c4c4" /></ToolButton>
          <TopDropdown>Account<Arrow /></TopDropdown>
          <TopDropdown>Layers<Arrow /></TopDropdown>
          <TopDropdown>Layout<Arrow /></TopDropdown>
        </RightGroup>
      </Toolbar>

      <TopArea>
        <Panel $w={330}>
          <TabStrip>
            <Tab $w={120} $active $focus><List size={13} color="#c4c4c4" />Hierarchy</Tab>
            <TabActions><Lock /><Dots /></TabActions>
          </TabStrip>
          <PanelBar>
            <Plus ml={7} />
            <PlusArrow $mr={10} />
            <SearchBox $w={272}><SearchIcon />All</SearchBox>
          </PanelBar>
          <Crumbs>
            <ChevronLeft size={15} color="#8a8a8a" />
            <CrumbCenter>
              <PrefabCube /><CrumbBold>model</CrumbBold>
            </CrumbCenter>
          </Crumbs>
          <TreeBody>
            <TreeRow $pl={43}><Caret /><Box size={18} color="#c4c4c4" strokeWidth={1.1} />model</TreeRow>
            <TreeRow $pl={75} $sel><Box size={18} color="#c4c4c4" strokeWidth={1.1} />default</TreeRow>
          </TreeBody>
        </Panel>

        <Panel $w={1466}>
          <TabStrip>
            <Tab $w={97} $active $pl={11}><Hash size={13} color="#c4c4c4" />Scene</Tab>
            <Tab $w={80} $pl={10} $gap={4}><Gamepad2 size={17} fill="#c4c4c4" color="#555" />Game</Tab>
            <TabActions><Dots /></TabActions>
          </TabStrip>
          <SceneBar>
            <SceneTool $w={150} $between>Shaded<Arrow /></SceneTool>
            <SceneTool $w={33} $ml={8}>2D</SceneTool>
            <SceneTool $w={32} $ml={8}><Lightbulb size={16} fill="#c4c4c4" color="#c4c4c4" /></SceneTool>
            <SceneTool $w={32}><Volume1 size={15} fill="#c4c4c4" color="#c4c4c4" /></SceneTool>
            <SceneTool $w={52} $on><FxIcon /><GapArrow /></SceneTool>
            <SceneTool $w={42} $on><EyeOff />0</SceneTool>
            <SceneTool $w={55} $on><GridToggle /><GapArrow $ml={12} /></SceneTool>
            <SceneRight>
              <SceneTool $w={34}><ToolsIcon s={18} /></SceneTool>
              <SceneTool $w={44}><Video size={17} fill="#c4c4c4" color="#c4c4c4" /><Arrow /></SceneTool>
              <SceneTool $w={88} $on>Gizmos<GapArrow $ml={5} /></SceneTool>
              <SearchBox $w={255} $ml={9}><SearchIcon />All</SearchBox>
            </SceneRight>
          </SceneBar>
          <SceneCrumbs>
            <UnityMark />
            <ScenesLabel>Scenes</ScenesLabel>
            <Divider />
            <PrefabCube />
            <CrumbBold $ml={4}>model</CrumbBold>
            <AutoSave>
              <CheckBox><Check /></CheckBox>
              Auto Save
            </AutoSave>
          </SceneCrumbs>
          <SceneView><Scene3D /></SceneView>
        </Panel>

        <Panel $w={760}>
          <TabStrip>
            <Tab $w={118} $active $pl={11}><Info size={14} fill="#c4c4c4" color="#333" />Inspector</Tab>
            <TabActions><Lock /><Dots /></TabActions>
          </TabStrip>
          <Inspector />
        </Panel>
      </TopArea>

      <Separator />

      <BottomArea>
        <TabStrip>
          <Tab $w={101} $active $pl={9} $gap={4}><Folder size={15} fill="#c4c4c4" color="#c4c4c4" />Project</Tab>
          <Tab $w={100} $pl={13}><FileText size={14} color="#c4c4c4" />Console</Tab>
          <TabActions><Lock /><Dots /></TabActions>
        </TabStrip>
        <PanelBar>
          <Plus />
          <PlusArrow />
          <SearchBox $w={375} $ml={2002}><SearchIcon /></SearchBox>
          <FilterTool $w={34}><ShapesIcon /></FilterTool>
          <FilterTool $w={33}><Tag size={16} fill="#c4c4c4" color="#c4c4c4" /></FilterTool>
          <FilterTool $w={32}><Star size={15} fill="#8a8a8a" color="#8a8a8a" /></FilterTool>
          <FilterTool $w={43}><EyeOff s={18} />9</FilterTool>
        </PanelBar>
        <ProjectBody>
          <ProjectTree>
            <ProjectRow $pl={6} $bold><Caret /><Star size={15} fill="#f2b124" color="#f2b124" />Favorites</ProjectRow>
            {["All Materials", "All Models", "All Prefabs"].map(t => (
              <ProjectRow key={t} $pl={39} $gap={4}><Search size={17} color="#8a8a8a" strokeWidth={1.4} />{t}</ProjectRow>
            ))}
            <ProjectRow $pl={6} $mt={19} $bold $gap={5}><Caret /><FolderOpen size={16} fill="#c4c4c4" color="#c4c4c4" strokeWidth={1} />Assets</ProjectRow>
            {["Meshes", "Prefabs", "Scenes", "Scripts", "Shaders"].map(t => (
              <ProjectRow key={t} $pl={40} $gap={3} $sel={t === "Prefabs"}><FolderIcon />{t}</ProjectRow>
            ))}
            <ProjectRow $pl={6} $bold $gap={6}><Caret $right /><Folder size={15} fill="#c4c4c4" color="#c4c4c4" strokeWidth={1} />Packages</ProjectRow>
          </ProjectTree>
          <ProjectMain>
            <AssetCrumbs>
              Assets
              <ChevronRight size={15} color="#8a8a8a" />
              <CrumbBold>Prefabs</CrumbBold>
            </AssetCrumbs>
            <AssetGrid>
              <Asset><Thumb><TilePlaneA /></Thumb><AssetName>battle_pla...</AssetName></Asset>
              <Asset><Thumb><TileSpire /></Thumb><AssetName>model</AssetName></Asset>
              <Asset><Thumb><TilePlaneB /></Thumb><AssetName>passenger...</AssetName></Asset>
            </AssetGrid>
            <StatusBar>
              <SliderTrack><SliderKnob /></SliderTrack>
            </StatusBar>
          </ProjectMain>
        </ProjectBody>
      </BottomArea>
    </Window>
  );
}
